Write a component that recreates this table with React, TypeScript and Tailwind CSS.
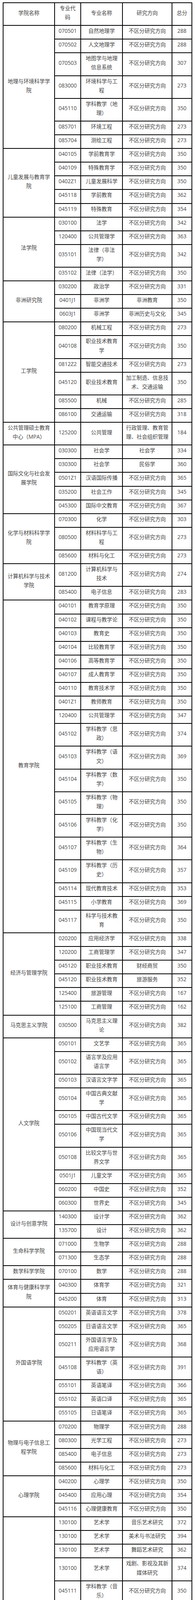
import React from "react";

const N = "不区分研究方向";
type Row = [string, string, string, string];
type Group = { name: string; rows: Row[] };

const groups: Group[] = [
  {
    name: "地理与环境科学学院",
    rows: [
      ["070501", "自然地理学", N, "288"],
      ["070502", "人文地理学", N, "288"],
      ["070503", "地图学与地理信息系统", N, "307"],
      ["083000", "环境科学与工程", N, "273"],
      ["045110", "学科教学（地理）", N, "350"],
      ["085701", "环境工程", N, "273"],
      ["085704", "测绘工程", N, "273"],
    ],
  },
  {
    name: "儿童发展与教育学院",
    rows: [
      ["040105", "学前教育学", N, "350"],
      ["040109", "特殊教育学", N, "350"],
      ["0402Z1", "儿童发展科学", N, "350"],
      ["045118", "学前教育", N, "362"],
      ["045119", "特殊教育", N, "354"],
    ],
  },
  {
    name: "法学院",
    rows: [
      ["030100", "法学", N, "342"],
      ["120400", "公共管理学", N, "363"],
      ["035101", "法律（非法学）", N, "342"],
      ["035102", "法律（法学）", N, "350"],
    ],
  },
  {
    name: "非洲研究院",
    rows: [
      ["030200", "政治学", N, "331"],
      ["0401J1", "非洲学", "非洲教育", "350"],
      ["0603J1", "非洲学", "非洲历史与文化", "345"],
    ],
  },
  {
    name: "工学院",
    rows: [
      ["080200", "机械工程", N, "273"],
      ["040108", "职业技术教育学", N, "350"],
      ["0812Z2", "智能交通技术", N, "273"],
      ["045120", "职业技术教育", "加工制造、信息技术、交通运输", "350"],
      ["085500", "机械", N, "285"],
      ["086100", "交通运输", N, "318"],
    ],
  },
  {
    name: "公共管理硕士教育中心（MPA）",
    rows: [["125200", "公共管理", "行政管理、教育管理、社会组织管理", "184"]],
  },
  {
    name: "国际文化与社会发展学院",
    rows: [
      ["030300", "社会学", "社会学", "334"],
      ["030300", "社会学", "民俗学", "360"],
      ["0501Z1", "汉语国际传播", N, "365"],
      ["035200", "社会工作", N, "345"],
      ["045300", "国际中文教育", N, "367"],
    ],
  },
  {
    name: "化学与材料科学学院",
    rows: [
      ["070300", "化学", N, "303"],
      ["080500", "材料科学与工程", N, "273"],
      ["085600", "材料与化工", N, "273"],
    ],
  },
  {
    name: "计算机科学与技术学院",
    rows: [
      ["081200", "计算机科学与技术", N, "274"],
      ["085400", "电子信息", N, "283"],
    ],
  },
  {
    name: "教育学院",
    rows: [
      ["040101", "教育学原理", N, "350"],
      ["040102", "课程与教学论", N, "350"],
      ["040103", "教育史", N, "350"],
      ["040104", "比较教育学", N, "350"],
      ["040106", "高等教育学", N, "350"],
      ["040107", "成人教育学", N, "350"],
      ["040110", "教育技术学", N, "350"],
      ["0401Z1", "教师教育", N, "350"],
      ["120400", "公共管理学", N, "347"],
      ["045102", "学科教学（思政）", N, "374"],
      ["045103", "学科教学（语文）", N, "369"],
      ["045104", "学科教学（数学）", N, "350"],
      ["045105", "学科教学（物理）", N, "350"],
      ["045106", "学科教学（化学）", N, "350"],
      ["045107", "学科教学（生物）", N, "364"],
      ["045109", "学科教学（历史）", N, "357"],
      ["045114", "现代教育技术", N, "353"],
      ["045115", "小学教育", N, "369"],
      ["045117", "科学与技术教育", N, "350"],
    ],
  },
  {
    name: "经济与管理学院",
    rows: [
      ["020200", "应用经济学", N, "338"],
      ["120200", "工商管理学", N, "347"],
      ["045120", "职业技术教育", "财经商贸", "350"],
      ["045120", "职业技术教育", "旅游服务", "352"],
      ["125400", "旅游管理", N, "167"],
      ["125100", "工商管理", N, "162"],
    ],
  },
  {
    name: "马克思主义学院",
    rows: [["030500", "马克思主义理论", N, "382"]],
  },
  {
    name: "人文学院",
    rows: [
      ["050101", "文艺学", N, "365"],
      ["050102", "语言学及应用语言学", N, "365"],
      ["050103", "汉语言文字学", N, "365"],
      ["050104", "中国古典文献学", N, "365"],
      ["050105", "中国古代文学", N, "365"],
      ["050106", "中国现当代文学", N, "365"],
      ["050108", "比较文学与世界文学", N, "365"],
      ["0501J1", "儿童文学", N, "365"],
      ["060200", "中国史", N, "352"],
      ["060300", "世界史", N, "345"],
    ],
  },
  {
    name: "设计与创意学院",
    rows: [
      ["140300", "设计学", N, "362"],
      ["135700", "设计", N, "362"],
    ],
  },
  {
    name: "生命科学学院",
    rows: [
      ["071000", "生物学", N, "288"],
      ["071300", "生态学", N, "288"],
    ],
  },
  {
    name: "数学科学学院",
    rows: [["070100", "数学", N, "288"]],
  },
  {
    name: "体育与健康科学学院",
    rows: [
      ["040300", "体育学", N, "321"],
      ["045200", "体育", N, "313"],
    ],
  },
  {
    name: "外国语学院",
    rows: [
      ["050201", "英语语言文学", N, "378"],
      ["050205", "日语语言文学", N, "365"],
      ["050211", "外国语言学及应用语言学", N, "368"],
      ["045108", "学科教学（英语）", N, "391"],
      ["055101", "英语笔译", N, "366"],
      ["055102", "英语口译", N, "365"],
      ["055105", "日语笔译", N, "365"],
    ],
  },
  {
    name: "物理与电子信息工程学院",
    rows: [
      ["070200", "物理学", N, "288"],
      ["080300", "光学工程", N, "273"],
      ["085400", "电子信息", N, "273"],
      ["085600", "材料与化工", N, "273"],
    ],
  },
  {
    name: "心理学院",
    rows: [
      ["040200", "心理学", N, "350"],
      ["045400", "应用心理", N, "354"],
      ["045116", "心理健康教育", N, "350"],
    ],
  },
  {
    name: "艺术学院",
    rows: [
      ["130100", "艺术学", "音乐艺术研究", "372"],
      ["130100", "艺术学", "美术与书法研究", "394"],
      ["130100", "艺术学", "舞蹈艺术研究", "362"],
      ["130100", "艺术学", "戏剧、影视及其新媒体研究", "374"],
      ["045111", "学科教学（音乐）", N, "350"],
      ["045113", "学科教学（美术）", N, "362"],
      ["135200", "音乐", "声乐演唱", "362"],
      ["135200", "音乐", "钢琴演奏", "371"],
      ["135200", "音乐", "音乐教育", "383"],
      ["135400", "戏剧与影视", N, "381"],
      ["135600", "美术与书法", N, "378"],
    ],
  },
];

const cell = "border border-black pt-px pb-[9px] px-[7px] align-middle font-normal";

export default function App() {
  return (
    <div className="bg-white pt-[6px] pl-[7px] pb-[58px] font-['Open_Sans','Noto_Sans_CJK_SC',sans-serif]">
      <table className="table-fixed w-[486px] border-separate border-spacing-0 border border-black text-[13.6px] leading-[23.1px] text-[#454545] text-center [text-spacing-trim:space-all]">
        <thead>
          <tr>
            <th className={`${cell} w-[132px]`}>学院名称</th>
            <th className={`${cell} w-[67px]`}>专业代码</th>
            <th className={`${cell} w-[107px]`}>专业名称</th>
            <th className={`${cell} w-[127px]`}>研究方向</th>
            <th className={`${cell} w-[51px]`}>总分</th>
          </tr>
        </thead>
        <tbody>
          {groups.map((g) =>
            g.rows.map((r, i) => (
              <tr key={g.name + i}>
                {i === 0 && (
                  <td className={cell} rowSpan={g.rows.length}>
                    {g.name}
                  </td>
                )}
                <td className={cell}>{r[0]}</td>
                <td className={cell}>{r[1]}</td>
                <td className={cell}>{r[2]}</td>
                <td className={cell}>{r[3]}</td>
              </tr>
            ))
          )}
        </tbody>
      </table>
    </div>
  );
}
